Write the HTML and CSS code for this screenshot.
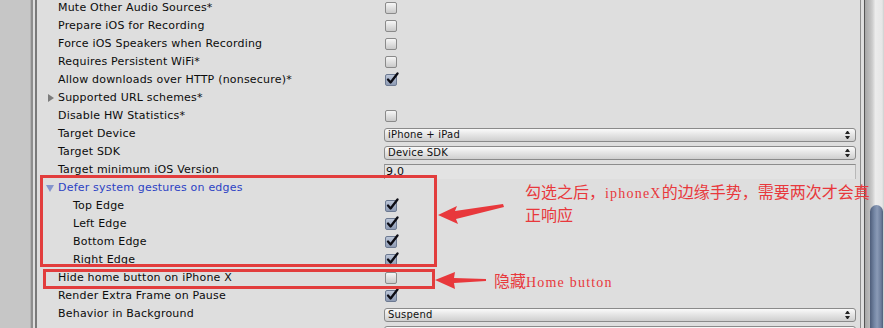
FILE: index.html
```html
<!DOCTYPE html>
<html lang="en">

<head>
    <meta charset="UTF-8">
    <title>Player Settings - iOS</title>
    <link rel="stylesheet" href="styles.css">
</head>

<body>

    <div class="window">
        <div class="side-strip"></div>

        <div class="inspector">
            <div class="rows">
                <div class="row">
                    <span class="label">Mute Other Audio Sources*</span>
                    <span class="value"><span class="check"></span></span>
                </div>
                <div class="row">
                    <span class="label">Prepare iOS for Recording</span>
                    <span class="value"><span class="check"></span></span>
                </div>
                <div class="row">
                    <span class="label">Force iOS Speakers when Recording</span>
                    <span class="value"><span class="check"></span></span>
                </div>
                <div class="row">
                    <span class="label">Requires Persistent WiFi*</span>
                    <span class="value"><span class="check"></span></span>
                </div>
                <div class="row">
                    <span class="label">Allow downloads over HTTP (nonsecure)*</span>
                    <span class="value"><span class="check checked"><svg viewBox="0 0 14 14"><path d="M3 7.5 L5.6 10.5 L12.5 1.5" /></svg></span></span>
                </div>
                <div class="row">
                    <span class="label foldout"><span class="fold-arrow closed"></span>Supported URL schemes*</span>
                    <span class="value"></span>
                </div>
                <div class="row">
                    <span class="label">Disable HW Statistics*</span>
                    <span class="value"><span class="check"></span></span>
                </div>
                <div class="row">
                    <span class="label">Target Device</span>
                    <span class="value"><span class="popup">iPhone + iPad<span class="popup-arrows"></span></span></span>
                </div>
                <div class="row">
                    <span class="label">Target SDK</span>
                    <span class="value"><span class="popup">Device SDK<span class="popup-arrows"></span></span></span>
                </div>
                <div class="row">
                    <span class="label">Target minimum iOS Version</span>
                    <span class="value"><span class="text-field">9.0</span></span>
                </div>
                <div class="row">
                    <span class="label foldout active"><span class="fold-arrow open"></span>Defer system gestures on edges</span>
                    <span class="value"></span>
                </div>
                <div class="row">
                    <span class="label sub">Top Edge</span>
                    <span class="value"><span class="check checked"><svg viewBox="0 0 14 14"><path d="M3 7.5 L5.6 10.5 L12.5 1.5" /></svg></span></span>
                </div>
                <div class="row">
                    <span class="label sub">Left Edge</span>
                    <span class="value"><span class="check checked"><svg viewBox="0 0 14 14"><path d="M3 7.5 L5.6 10.5 L12.5 1.5" /></svg></span></span>
                </div>
                <div class="row">
                    <span class="label sub">Bottom Edge</span>
                    <span class="value"><span class="check checked"><svg viewBox="0 0 14 14"><path d="M3 7.5 L5.6 10.5 L12.5 1.5" /></svg></span></span>
                </div>
                <div class="row">
                    <span class="label sub">Right Edge</span>
                    <span class="value"><span class="check checked"><svg viewBox="0 0 14 14"><path d="M3 7.5 L5.6 10.5 L12.5 1.5" /></svg></span></span>
                </div>
                <div class="row">
                    <span class="label">Hide home button on iPhone X</span>
                    <span class="value"><span class="check"></span></span>
                </div>
                <div class="row">
                    <span class="label">Render Extra Frame on Pause</span>
                    <span class="value"><span class="check checked"><svg viewBox="0 0 14 14"><path d="M3 7.5 L5.6 10.5 L12.5 1.5" /></svg></span></span>
                </div>
                <div class="row">
                    <span class="label">Behavior in Background</span>
                    <span class="value"><span class="popup">Suspend<span class="popup-arrows"></span></span></span>
                </div>
                <div class="row">
                    <span class="label"></span>
                    <span class="value"><span class="popup"></span></span>
                </div>
            </div>
        </div>

        <div class="scrollbar">
            <div class="scroll-thumb"></div>
        </div>
    </div>

    <!-- annotations drawn over the screenshot -->
    <div class="mark mark-gestures"></div>
    <div class="mark mark-home"></div>

    <svg class="arrows" width="884" height="328">
        <polygon points="438,215 457,206 455,211 503,204 504,207 456,219 458,224" />
        <polygon points="435,280 455,272 454,278 486,279 486,281 454,283 455,289" />
    </svg>

    <div class="note note-gestures">勾选之后，<span class="latin">iphoneX</span>的边缘手势，需要两次才会真<br>正响应</div>
    <div class="note note-home">隐藏<span class="latin">Home button</span></div>

</body>

</html>
```

FILE: styles.css
```css
body {
    margin: 0;
    width: 884px;
    height: 328px;
    overflow: hidden;
    background: #dedede;
    font-family: "DejaVu Sans", Verdana, sans-serif;
    font-size: 11px;
    letter-spacing: 0.2px;
    color: #0c0c0c;
}

.window {
    display: flex;
    height: 328px;
}

.side-strip {
    width: 31px;
    flex: none;
    background: #c6c6c6;
    border-right: 2px solid #8e8e8e;
    box-shadow: inset -1px 0 0 #b2b2b2;
    margin-right: 3px;
}

.side-strip::after {
    content: "";
    display: block;
    width: 2px;
    height: 100%;
    margin-left: 35px;
    background: #7a7a7a;
}

.inspector {
    width: 822px;
    flex: none;
    margin-left: 2px;
    border-right: 1px solid #8c8c8c;
}

.rows {
    margin-top: -1px;
}

.row {
    display: grid;
    grid-template-columns: 346px 472px;
    height: 18px;
    align-items: center;
    white-space: nowrap;
}

.label {
    padding-left: 20px;
    line-height: 18px;
}

.label.sub {
    padding-left: 35px;
}

.label.foldout {
    padding-left: 7px;
    display: flex;
    align-items: center;
}

.label.active {
    color: #2c42c4;
}

.fold-arrow {
    width: 13px;
    height: 18px;
    flex: none;
    position: relative;
}

.fold-arrow.closed::before {
    content: "";
    position: absolute;
    left: 3px;
    top: 5px;
    border-left: 6px solid #7c7c7c;
    border-top: 4px solid transparent;
    border-bottom: 4px solid transparent;
}

.fold-arrow.open::before {
    content: "";
    position: absolute;
    left: 1px;
    top: 6px;
    border-top: 7px solid #8494cc;
    border-left: 4px solid transparent;
    border-right: 4px solid transparent;
}

.value {
    display: flex;
    align-items: center;
    height: 18px;
}

.check {
    width: 10px;
    height: 10px;
    margin-left: 1px;
    border: 1px solid #8a8a8a;
    border-radius: 2px;
    background: linear-gradient(#f6f6f6, #c9c9c9);
    position: relative;
}

.check.checked {
    border-color: #6d7a92;
    background: linear-gradient(#bcc6d8, #8e9bb4);
}

.check svg {
    position: absolute;
    left: -1px;
    top: -3px;
    width: 14px;
    height: 14px;
}

.check svg path {
    fill: none;
    stroke: #0c0c14;
    stroke-width: 2.3;
    stroke-linecap: round;
    stroke-linejoin: round;
}

.popup {
    width: 470px;
    height: 12px;
    margin-top: 1px;
    border: 1px solid #8a8a8a;
    border-radius: 3px;
    background: linear-gradient(#fafafa, #e6e6e6 45%, #cfcfcf);
    font-size: 10px;
    line-height: 12px;
    padding-left: 3px;
    box-sizing: content-box;
    width: 467px;
    display: flex;
    justify-content: space-between;
    align-items: center;
    color: #111;
}

.popup-arrows {
    width: 5px;
    height: 8px;
    margin-right: 5px;
    display: flex;
    flex-direction: column;
    justify-content: space-between;
}

.popup-arrows::before,
.popup-arrows::after {
    content: "";
    border-left: 2px solid transparent;
    border-right: 2px solid transparent;
}

.popup-arrows::before {
    border-bottom: 3px solid #222;
}

.popup-arrows::after {
    border-top: 3px solid #222;
}

.text-field {
    width: 469px;
    height: 14px;
    margin-top: 3px;
    border-top: 1px solid #8c8c8c;
    border-left: 1px solid #9c9c9c;
    border-right: 1px solid #b8b8b8;
    background: #e3e3e3;
    font-size: 11px;
    line-height: 14px;
    padding-left: 1px;
}

.scrollbar {
    width: 19px;
    flex: none;
    margin-left: 3px;
    border-left: 1px solid #555;
    background: linear-gradient(90deg, #a6a6a6, #bcbcbc 25%, #cfcfcf 40%, #ececec 55%, #e6e6e6 90%, #cfcfcf);
    display: flex;
    flex-direction: column;
    align-items: flex-start;
}

.scroll-thumb {
    margin-top: 205px;
    margin-left: 5px;
    width: 13px;
    flex: 1;
    border-radius: 7px 7px 0 0;
    background: linear-gradient(90deg, #4e5d7a, #7688a6 35%, #8a9ab6 55%, #6c7d9b 85%, #4e5d7a);
}

.mark {
    position: absolute;
    border: 3px solid #e23d3d;
    box-sizing: border-box;
}

.mark-gestures {
    left: 40px;
    top: 175px;
    width: 397px;
    height: 92px;
}

.mark-home {
    left: 43px;
    top: 269px;
    width: 392px;
    height: 20px;
}

.arrows {
    position: absolute;
    left: 0;
    top: 0;
}

.arrows polygon {
    fill: #e8383c;
}

.note {
    position: absolute;
    color: #e8383c;
    font-family: "Noto Sans CJK SC", sans-serif;
    font-size: 16px;
    line-height: 20px;
    letter-spacing: 0;
    white-space: nowrap;
}

.note .latin {
    font-family: "Liberation Serif", serif;
    font-size: 14px;
    letter-spacing: 1.2px;
}

.note-gestures {
    left: 525px;
    top: 181px;
}

.note-home {
    left: 494px;
    top: 270px;
}
```
